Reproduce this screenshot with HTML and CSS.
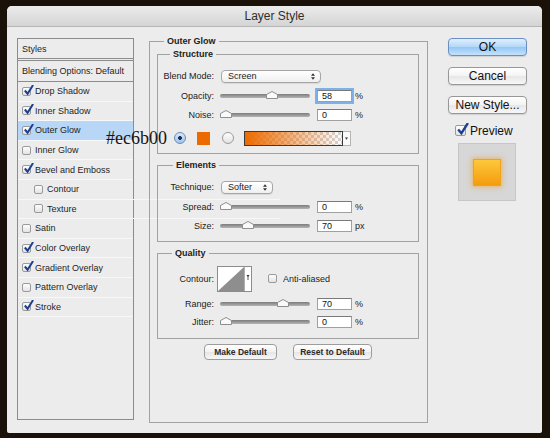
FILE: index.html
```html
<!DOCTYPE html>
<html lang="en">
<head>
  <meta charset="UTF-8">
  <title>Layer Style</title>
  <link rel="stylesheet" href="styles.css">
</head>
<body>
  <div class="window">
    <div class="titlebar">Layer Style</div>
    <div class="content">

      <ul class="styles-list">
        <li class="head">Styles</li>
        <li class="blend">Blending Options: Default</li>
        <li><span class="cb on"><svg viewBox="0 0 12 12"><path d="M2 6 L5 9.5 L11 0"/></svg></span>Drop Shadow</li>
        <li><span class="cb on"><svg viewBox="0 0 12 12"><path d="M2 6 L5 9.5 L11 0"/></svg></span>Inner Shadow</li>
        <li class="sel"><span class="cb on"><svg viewBox="0 0 12 12"><path d="M2 6 L5 9.5 L11 0"/></svg></span>Outer Glow</li>
        <li><span class="cb"></span>Inner Glow</li>
        <li><span class="cb on"><svg viewBox="0 0 12 12"><path d="M2 6 L5 9.5 L11 0"/></svg></span>Bevel and Emboss</li>
        <li class="sub"><span class="cb"></span>Contour</li>
        <li class="sub"><span class="cb"></span>Texture</li>
        <li><span class="cb"></span>Satin</li>
        <li><span class="cb on"><svg viewBox="0 0 12 12"><path d="M2 6 L5 9.5 L11 0"/></svg></span>Color Overlay</li>
        <li><span class="cb on"><svg viewBox="0 0 12 12"><path d="M2 6 L5 9.5 L11 0"/></svg></span>Gradient Overlay</li>
        <li><span class="cb"></span>Pattern Overlay</li>
        <li><span class="cb on"><svg viewBox="0 0 12 12"><path d="M2 6 L5 9.5 L11 0"/></svg></span>Stroke</li>
      </ul>

      <fieldset class="group main">
        <legend>Outer Glow</legend>

        <fieldset class="group sub structure">
          <legend>Structure</legend>
          <div class="row r-blend">
            <span class="lbl">Blend Mode:</span>
            <div class="select mode">Screen<svg class="arrows" viewBox="0 0 5 8"><path d="M2.5 0 L5 3 H0Z M2.5 8 L5 5 H0Z"/></svg></div>
          </div>
          <div class="row r-opacity">
            <span class="lbl">Opacity:</span>
            <div class="slider"><div class="track"></div><svg class="thumb" style="left:46px" viewBox="0 0 12 8"><path d="M0.5 3.5 L6 0.5 L11.5 3.5 V7.5 H0.5 Z"/></svg></div>
            <div class="field focus">58</div><span class="unit">%</span>
          </div>
          <div class="row r-noise">
            <span class="lbl">Noise:</span>
            <div class="slider"><div class="track"></div><svg class="thumb" style="left:0px" viewBox="0 0 12 8"><path d="M0.5 3.5 L6 0.5 L11.5 3.5 V7.5 H0.5 Z"/></svg></div>
            <div class="field">0</div><span class="unit">%</span>
          </div>
          <div class="row r-color">
            <span class="radio on"></span>
            <span class="swatch"></span>
            <span class="radio"></span>
            <div class="gradient"><span class="ramp"></span><span class="drop"><svg viewBox="0 0 4 3"><path d="M0 0 H4 L2 3Z"/></svg></span></div>
          </div>
        </fieldset>

        <fieldset class="group sub elements">
          <legend>Elements</legend>
          <div class="row r-tech">
            <span class="lbl">Technique:</span>
            <div class="select tech">Softer<svg class="arrows" viewBox="0 0 5 8"><path d="M2.5 0 L5 3 H0Z M2.5 8 L5 5 H0Z"/></svg></div>
          </div>
          <div class="row r-spread">
            <span class="lbl">Spread:</span>
            <div class="slider"><div class="track"></div><svg class="thumb" style="left:0px" viewBox="0 0 12 8"><path d="M0.5 3.5 L6 0.5 L11.5 3.5 V7.5 H0.5 Z"/></svg></div>
            <div class="field">0</div><span class="unit">%</span>
          </div>
          <div class="row r-size">
            <span class="lbl">Size:</span>
            <div class="slider"><div class="track"></div><svg class="thumb" style="left:22px" viewBox="0 0 12 8"><path d="M0.5 3.5 L6 0.5 L11.5 3.5 V7.5 H0.5 Z"/></svg></div>
            <div class="field">70</div><span class="unit">px</span>
          </div>
        </fieldset>

        <fieldset class="group sub quality">
          <legend>Quality</legend>
          <div class="row r-contour">
            <span class="lbl">Contour:</span>
            <svg class="contour" viewBox="0 0 35 26">
              <rect x="0.5" y="0.5" width="34" height="25" fill="#fff" stroke="#8c8c8c"/>
              <path d="M1 25 L27 1 V25 Z" fill="#8e8e8e"/>
              <path d="M27.5 1 V25" stroke="#b0b0b0"/>
              <path d="M29.5 9 H32.5 L31 11.5 Z M30.6 11 H31.4 V14 H30.6Z" fill="#333"/>
            </svg>
            <span class="cb"></span><span class="cb-text">Anti-aliased</span>
          </div>
          <div class="row r-range">
            <span class="lbl">Range:</span>
            <div class="slider"><div class="track"></div><svg class="thumb" style="left:57px" viewBox="0 0 12 8"><path d="M0.5 3.5 L6 0.5 L11.5 3.5 V7.5 H0.5 Z"/></svg></div>
            <div class="field">70</div><span class="unit">%</span>
          </div>
          <div class="row r-jitter">
            <span class="lbl">Jitter:</span>
            <div class="slider"><div class="track"></div><svg class="thumb" style="left:0px" viewBox="0 0 12 8"><path d="M0.5 3.5 L6 0.5 L11.5 3.5 V7.5 H0.5 Z"/></svg></div>
            <div class="field">0</div><span class="unit">%</span>
          </div>
        </fieldset>

        <div class="defaults">
          <button class="small-btn">Make Default</button>
          <button class="small-btn">Reset to Default</button>
        </div>
      </fieldset>

      <div class="side">
        <button class="btn ok">OK</button>
        <button class="btn">Cancel</button>
        <button class="btn">New Style...</button>
        <div class="preview-toggle"><span class="cb on big"><svg viewBox="0 0 12 12"><path d="M2 6 L5 9.5 L11 0"/></svg></span>Preview</div>
        <div class="preview"><div class="chip"></div></div>
      </div>

    </div>
  </div>
  <div class="hex">#ec6b00</div>
</body>
</html>
```

FILE: styles.css
```css
* {
  box-sizing: border-box;
}
body {
  margin: 0;
  padding-top: 6px;
  width: 550px;
  height: 438px;
  overflow: hidden;
  background: #1a1209;
  font-family: "Liberation Sans", Arial, sans-serif;
  font-size: 9px;
  color: #1e1e1e;
}
.window {
  margin-left: 7px;
  width: 535px;
  height: 427px;
  background: #ececec;
  border-radius: 5px 5px 2px 2px;
}
.titlebar {
  height: 21px;
  line-height: 21px;
  text-align: center;
  font-size: 12px;
  color: #2e2e2e;
  background: linear-gradient(#ececec, #d4d4d4);
  border-bottom: 1px solid #b6b6b6;
  border-radius: 5px 5px 0 0;
}
.content {
  display: flex;
  align-items: flex-start;
  padding: 11px 0 0 10px;
}

/* left list */
.styles-list {
  list-style: none;
  margin: 0;
  padding: 0;
  width: 117px;
  height: 382px;
  border: 1px solid #8c8c8c;
  background: #ececec;
}
.styles-list li {
  display: flex;
  align-items: center;
  height: 19.6px;
  padding-left: 4px;
  border-bottom: 1px solid #f8f8f8;
}
.styles-list li.head {
  height: 22px;
  border-bottom: 3px double #8c8c8c;
}
.styles-list li.blend {
  height: 21px;
  border-bottom: 1px solid #8c8c8c;
}
.styles-list li.sub {
  padding-left: 16px;
}
.styles-list li.sel {
  background: #b8d6f6;
}
.cb {
  position: relative;
  flex: none;
  width: 9px;
  height: 9px;
  margin-right: 4px;
  border: 1px solid #9a9a9a;
  border-radius: 2px;
  background: linear-gradient(#fdfdfd, #e3e3e3);
}
.cb svg {
  position: absolute;
  left: 0;
  top: -3px;
  width: 11px;
  height: 11px;
  fill: none;
  stroke: #1d3f8f;
  stroke-width: 2.2;
}
.cb.big {
  width: 11px;
  height: 11px;
}
.cb.big svg {
  width: 13px;
  height: 13px;
}

/* group boxes */
.group {
  margin: 0;
  min-width: 0;
  border: 1px solid #a2a2a2;
}
.group legend {
  padding: 0 3px;
  font-weight: bold;
  font-size: 9px;
  line-height: 11px;
  color: #222;
}
.main {
  margin: -2px 0 0 15px;
  width: 279px;
  height: 387px;
  padding: 0 8px 0 7px;
}
.main > legend {
  margin-left: 7px;
}
.sub {
  width: 262px;
  padding: 0;
}
.sub legend {
  margin-left: 12px;
}
.structure {
  margin-top: 2px;
  padding: 9px 0 7px;
}
.elements {
  margin-top: 6px;
  padding: 9px 0 8px;
}
.elements legend {
  margin-left: 15px;
}
.quality {
  margin-top: 6px;
  padding: 6px 0 9px;
}
.quality legend {
  margin-left: 14px;
}

/* rows */
.row {
  display: flex;
  align-items: center;
  height: 14px;
}
.lbl {
  width: 56px;
  margin-right: 6px;
  text-align: right;
  white-space: nowrap;
  color: #222;
}
.r-blend, .r-tech { margin-bottom: 6px; }
.r-opacity, .r-spread { margin-bottom: 5px; }
.r-noise { margin-bottom: 8px; }
.r-color { height: 16px; padding-left: 16px; }
.r-contour { height: 27px; margin-bottom: 5px; }
.r-range { margin-bottom: 4px; }

.select {
  display: flex;
  align-items: center;
  justify-content: space-between;
  height: 13px;
  margin-left: 1px;
  padding: 0 5px 0 6px;
  border: 1px solid #a6a6a6;
  border-radius: 4px;
  background: linear-gradient(#ffffff, #f0f0f0);
  box-shadow: 0 1px 0 rgba(0, 0, 0, 0.08);
}
.select.mode { width: 100px; }
.select.tech { width: 52px; }
.arrows {
  width: 4px;
  height: 7px;
  fill: #333;
}

.slider {
  position: relative;
  width: 90px;
  height: 12px;
  margin-right: 7px;
  display: flex;
  align-items: center;
}
.track {
  width: 100%;
  height: 4px;
  border-radius: 2px;
  background: linear-gradient(#7c7c7c, #b4b4b4);
}
.thumb {
  position: absolute;
  top: 1px;
  width: 12px;
  height: 8px;
  fill: #fafafa;
  stroke: #8e8e8e;
}
.field {
  width: 35px;
  height: 12px;
  line-height: 11px;
  padding-left: 4px;
  margin-right: 3px;
  background: #fff;
  border: 1px solid #a0a0a0;
  border-top-color: #7a7a7a;
  color: #111;
}
.field.focus {
  box-shadow: 0 0 0 2px #7eb1ea;
}
.unit {
  color: #222;
}

.radio {
  flex: none;
  width: 12px;
  height: 12px;
  margin-right: 11px;
  border: 1px solid #9b9b9b;
  border-radius: 50%;
  background: linear-gradient(#ffffff, #e2e2e2);
}
.radio.on {
  background: radial-gradient(circle, #1b2f5a 0 1.6px, transparent 2.2px), linear-gradient(#dbe9f8, #9ec5ec);
  border-color: #6f8cb4;
}
.radio + .swatch + .radio {
  margin-right: 10px;
}
.swatch {
  width: 13px;
  height: 13px;
  margin-right: 12px;
  background: #ec6b00;
}
.gradient {
  display: flex;
  height: 15px;
}
.ramp {
  width: 99px;
  border: 1px solid #3a3a3a;
  background:
    linear-gradient(to right, #ec6b00, rgba(236, 107, 0, 0.55) 45%, rgba(236, 107, 0, 0)),
    repeating-conic-gradient(#d4d4d4 0 25%, #ffffff 0 50%) 0 0 / 6px 6px;
}
.drop {
  display: flex;
  align-items: center;
  justify-content: center;
  width: 8px;
  border: 1px solid #b4b4b4;
  border-left: none;
  background: #fafafa;
}
.drop svg {
  width: 3px;
  height: 3px;
  fill: #333;
}

.contour {
  width: 35px;
  height: 26px;
  margin-left: -3px;
  margin-right: 16px;
}
.cb-text {
  margin-left: 2px;
  color: #222;
}

.defaults {
  display: flex;
  justify-content: center;
  gap: 16px;
  margin-top: 5px;
}
.small-btn {
  height: 16px;
  padding: 0;
  font-family: inherit;
  font-size: 8.5px;
  font-weight: bold;
  color: #2a2a2a;
  border: 1px solid #9c9c9c;
  border-radius: 4px;
  background: linear-gradient(#ffffff, #f2f2f2 50%, #e6e6e6 51%, #f6f6f6);
}
.small-btn:first-child { width: 73px; }
.small-btn:last-child { width: 79px; }

/* right column */
.side {
  display: flex;
  flex-direction: column;
  margin-left: 20px;
  width: 79px;
}
.btn {
  height: 18px;
  padding: 0;
  margin-bottom: 11px;
  font-family: inherit;
  font-size: 12px;
  color: #111;
  border: 1px solid #979797;
  border-radius: 4px;
  background: linear-gradient(#ffffff, #f3f3f3 50%, #e7e7e7 51%, #f7f7f7);
  box-shadow: 0 1px 1px rgba(0, 0, 0, 0.12);
}
.btn.ok {
  border-color: #6a8fc2;
  background: linear-gradient(#e0f0fe, #b2d7f8 50%, #94c7f4 51%, #c3e2fc);
}
.preview-toggle {
  display: flex;
  align-items: center;
  height: 11px;
  padding-left: 7px;
  font-size: 12px;
  color: #111;
}
.preview-toggle .cb {
  margin-right: 4px;
}
.preview {
  display: flex;
  align-items: center;
  justify-content: center;
  width: 58px;
  height: 58px;
  margin: 7px 0 0 10px;
  border: 1px solid #c6c6c6;
  background: #d7d7d7;
}
.chip {
  width: 28px;
  height: 27px;
  border: 1px solid #eea21e;
  background: linear-gradient(#fdc83c, #f59c0d);
  box-shadow: 0 0 5px 1px rgba(240, 150, 10, 0.55);
}

/* annotation over the dialog */
.hex {
  position: absolute;
  left: 106px;
  top: 128px;
  font-family: "Liberation Serif", "Times New Roman", serif;
  font-size: 18px;
  line-height: 20px;
  color: #151515;
}
```
